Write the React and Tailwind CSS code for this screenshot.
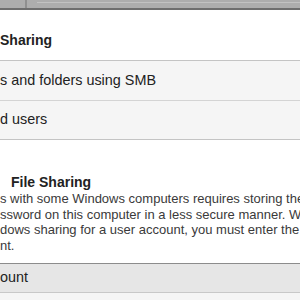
import React from 'react';

const font = { fontFamily: '"Liberation Sans", Arial, sans-serif' };

export default function App() {
  return (
    <div className="w-[300px] h-[300px] overflow-hidden bg-white text-[#222]" style={font}>
      {/* toolbar strip */}
      <div className="relative h-[10px] bg-[#adadad] border-b-2 border-[#6e6e6e]">
        <div className="absolute left-[25px] top-0 h-full w-[2px] bg-[#8f8f8f]"></div>
        <div className="absolute left-[37px] right-0 top-[2px] h-[1px] bg-[#c2c2c2]"></div>
      </div>

      <div className="pt-[20px] pb-[10px] h-[50px] text-[14px] font-bold leading-[20px]">Sharing</div>

      <div className="border-t border-b border-[#c4c4c4] bg-[#f5f5f5] text-[14.4px]">
        <div className="h-[40px] flex items-center border-b border-[#d4d4d4]">s and folders using SMB</div>
        <div className="h-[38px] flex items-center">d users</div>
      </div>

      <div className="pt-[33px] text-[14px] font-bold leading-[18px] pl-[11px]">File Sharing</div>
      <div className="text-[13px] leading-[15.5px] text-[#3a3a3a] whitespace-nowrap">
        <div>s with some Windows computers requires storing the</div>
        <div>ssword on this computer in a less secure manner. Wh</div>
        <div>dows sharing for a user account, you must enter the p</div>
        <div>nt.</div>
      </div>

      <div className="mt-[10px] h-[30px] flex items-center border-t border-b border-t-[#8c8c8c] border-b-[#c8c8c8] bg-[#e6e6e6] text-[14.4px]">ount</div>
      <div className="h-[20px] bg-[#f5f5f5]"></div>
    </div>
  );
}
